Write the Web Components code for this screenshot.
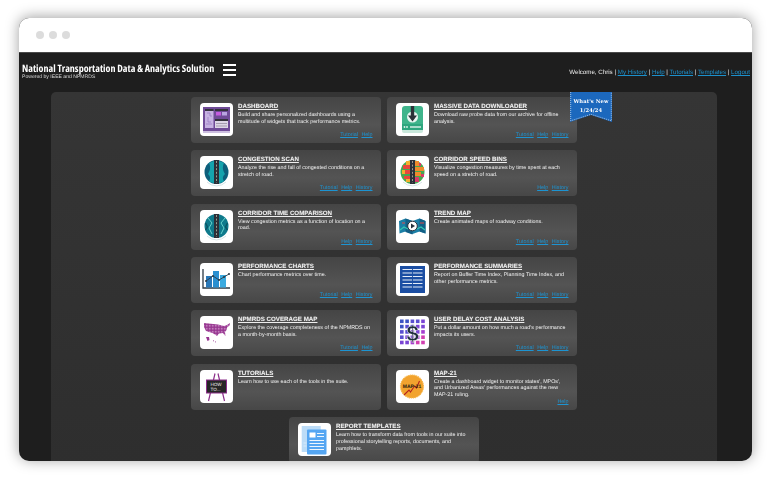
<!DOCTYPE html>
<html lang="en">
<head>
<meta charset="utf-8">
<title>National Transportation Data &amp; Analytics Solution</title>
<style>
  html, body { margin: 0; height: 100%; background: #fff; overflow: hidden; }
  body { font-family: "Liberation Sans", Arial, sans-serif; text-rendering: geometricPrecision; }
</style>
</head>
<body>
<browser-frame>
  <site-header></site-header>
  <tool-panel>
    <whats-new slot="badge"></whats-new>
    <tool-card heading="Dashboard" links="Tutorial,Help" icon="dashboard">Build and share personalized dashboards using a multitude of widgets that track performance metrics.</tool-card>
    <tool-card heading="Massive Data Downloader" links="Tutorial,Help,History" icon="download">Download raw probe data from our archive for offline analysis.</tool-card>
    <tool-card heading="Congestion Scan" links="Tutorial,Help,History" icon="scan">Analyze the rise and fall of congested conditions on a stretch of road.</tool-card>
    <tool-card heading="Corridor Speed Bins" links="Help,History" icon="bins">Visualize congestion measures by time spent at each speed on a stretch of road.</tool-card>
    <tool-card heading="Corridor Time Comparison" links="Help,History" icon="compare">View congestion metrics as a function of location on a road.</tool-card>
    <tool-card heading="Trend Map" links="Tutorial,Help,History" icon="trend">Create animated maps of roadway conditions.</tool-card>
    <tool-card heading="Performance Charts" links="Tutorial,Help,History" icon="charts">Chart performance metrics over time.</tool-card>
    <tool-card heading="Performance Summaries" links="Tutorial,Help,History" icon="summaries">Report on Buffer Time Index, Planning Time Index, and other performance metrics.</tool-card>
    <tool-card heading="NPMRDS Coverage Map" links="Tutorial,Help" icon="coverage">Explore the coverage completeness of the NPMRDS on a month-by-month basis.</tool-card>
    <tool-card heading="User Delay Cost Analysis" links="Tutorial,Help,History" icon="cost">Put a dollar amount on how much a road's performance impacts its users.</tool-card>
    <tool-card heading="Tutorials" icon="tutorials">Learn how to use each of the tools in the suite.</tool-card>
    <tool-card heading="MAP-21" links="Help" icon="map21">Create a dashboard widget to monitor states', MPOs', and Urbanized Areas' performances against the new MAP-21 ruling.</tool-card>
    <tool-card class="wide" heading="Report Templates" icon="report">Learn how to transform data from tools in our suite into professional storytelling reports, documents, and pamphlets.</tool-card>
  </tool-panel>
</browser-frame>

<script>
// road down the middle of the round icons
const road = `<rect x="14" y="4" width="5" height="24" fill="#2b2f38"/>
  <path d="M16.5 5v22" stroke="#e8e6c8" stroke-width=".6" stroke-dasharray="2 1.6"/>`;
const base = `<path d="M7 26a13.5 13.5 0 0 0 19 0" fill="none" stroke="#d5e4e6" stroke-width="1"/>`;

const grid = () => {
  let out = '';
  const cols = ['#3c55c4', '#5a4fd0', '#7a45d4', '#a63fd0', '#d23fb0'];
  for (let r = 0; r < 5; r++) for (let c = 0; c < 5; c++) {
    out += `<rect x="${4 + c * 5.3}" y="${3.5 + r * 5.3}" width="3.6" height="3.6" fill="${cols[Math.min(4, Math.floor((r + c) / 1.7))]}"/>`;
  }
  return out;
};

const icons = {
  dashboard: `<rect x="3" y="4" width="27" height="25" fill="#6f4b97"/>
    <rect x="3" y="28" width="27" height="2" fill="#cdbfe0"/>
    <rect x="5" y="6" width="8.5" height="2" fill="#34323c"/><rect x="5" y="8" width="8.5" height="17" fill="#c6b2e2"/>
    <path d="M7 10h3v3h2M8 14v5h3M6 21h6" stroke="#9a7cc4" stroke-width=".8" fill="none"/>
    <rect x="15" y="6" width="13" height="2" fill="#34323c"/><rect x="15" y="8" width="13" height="6" fill="#6f4b97"/>
    <rect x="16" y="9" width="5" height="3.5" fill="#c55be0"/><rect x="22" y="9" width="5" height="3.5" fill="#b9a4e0"/>
    <rect x="15" y="16" width="13" height="2" fill="#34323c"/><rect x="15" y="18" width="13" height="7" fill="#ddd6e6"/>
    <path d="M16 20.5h11M16 23h11" stroke="#8d8496" stroke-width=".7"/>`,
  download: `<path d="M6 6a3 3 0 0 1 3-3h15a3 3 0 0 1 3 3v17H6z" fill="#3fb48b"/>
    <rect x="6" y="21" width="21" height="6" fill="#2ea67e"/>
    <path d="M6 27h21v1a2 2 0 0 1-2 2H8a2 2 0 0 1-2-2z" fill="#c9e8dc"/>
    <circle cx="16.5" cy="14" r="5.5" fill="#e9f6f1"/>
    <path d="M14.8 3h3.4v9.5H21l-4.5 6-4.500-6h2.800z" fill="#2b3238"/>
    <circle cx="8.5" cy="24" r=".9" fill="#dff3ec"/><circle cx="11" cy="24" r=".9" fill="#dff3ec"/>
    <rect x="14" y="23.300" width="11" height="1.400" fill="#dff3ec"/>`,
  scan: `<circle cx="16.5" cy="16" r="12" fill="#0d5f7c"/>
    <path d="M9 7c2-1 4-2 5-2v22c-2 0-4-1-5-2 2-3 1-5-1-7 2-3 3-7 1-11zM24 7c-2-1-4-2-5-2v22c2 0 4-1 5-2-2-3-1-5 1-7-2-3-3-7-1-11z" fill="#15a3ad"/>
    ${road}${base}`,
  bins: `<circle cx="16.5" cy="16" r="12" fill="#45a84f"/>
    <path d="M7 9h7v4H7zM9 14h5v4H9zM8 20h6v3H8z" fill="#e8463d"/>
    <path d="M10 5h4v4h-4zM6 14h3v4H6zM10 23h4v3h-4z" fill="#f3b02e"/>
    <path d="M19 5h4v5h-4zM19 11h9v4h-9zM19 16h6v4h-6z" fill="#ee8a2c"/>
    <path d="M23 7h2v3h-2zM25 18h3v3h-3zM19 21h4v5h-4z" fill="#d93a6a"/>${road}${base}`,
  compare: `<circle cx="16.5" cy="16" r="12" fill="#0f7a8c"/>
    <path d="M8 8l4 5-3 5 3 6M25 8l-4 5 3 5-3 6" stroke="#67d2cc" stroke-width="1" fill="none"/>
    <path d="M5.5 13l2 4-2 3M27.5 13l-2 4 2 3" stroke="#0a5566" stroke-width="1.5" fill="none"/>${road}${base}`,
  trend: `<path d="M3 11l6.5-2.500 7 2.500 7-2.500 6 2.500v12.500l-6-2-7 2.500-7-2.500-6 2z" fill="#1b7fa6"/>
    <path d="M9.5 8.5V22l7 2.500V11zM23.5 8.5v13l6 2V11z" fill="#125f86"/>
    <path d="M4 20l4-3 4 2M21 19l4-2 4 3" stroke="#33c4b0" stroke-width="1.3" fill="none"/>
    <path d="M6 13h3M24 13h4" stroke="#e04a4a" stroke-width="1"/>
    <circle cx="16.5" cy="16" r="4.8" fill="#fff" stroke="#26313a" stroke-width="1"/><path d="M15 13.500l4 2.500-4 2.500z" fill="#26313a"/>`,
  charts: `<path d="M3 6v19h27" stroke="#2e3a44" stroke-width="1.3" fill="none"/>
    <rect x="6" y="13" width="6" height="11.5" fill="#2a78b8"/><rect x="13" y="8" width="6" height="16.5" fill="#2a8fd0"/><rect x="20" y="12" width="6" height="12.5" fill="#3aaae0"/>
    <path d="M6 18l7-5 6 4 5-3 5-3" stroke="#2e3a44" stroke-width=".9" fill="none"/>
    <g fill="#2e3a44"><circle cx="6" cy="18" r="1"/><circle cx="13" cy="13" r="1"/><circle cx="19" cy="17" r="1"/><circle cx="24" cy="14" r="1"/><circle cx="29" cy="11" r="1"/></g>`,
  summaries: `<rect x="4" y="3" width="25" height="27" fill="#1b4ea3"/>
    <path d="M6.5 6.5h20M6.5 10h20M6.5 13.5h20M6.5 17h20M6.5 20.5h20M6.5 24h20" stroke="#e4ecf8" stroke-width="1.2"/>
    <path d="M16.5 5v21" stroke="#1b4ea3" stroke-width=".9"/>`,
  coverage: `<defs><pattern id="dots" width="1.5" height="1.5" patternUnits="userSpaceOnUse"><rect width="1.5" height="1.5" fill="#96348f"/><rect width=".7" height=".7" fill="#dcaed8"/></pattern></defs>
    <path d="M4 7l14 1.500 2 .5 2 .5 2 .5 3-1 3-2-.5 2.500-2.500 2-.5 2.500-1.500 2 .5 4-1-1-1.500-2-4 .5-2 2.500-2-1.500-2.500-1.500-3.500-1-3-1-2-4z" fill="url(#dots)"/>
    <path d="M6 21l3 0 .5 3-2 1z" fill="#96348f"/><path d="M13 24.500l1 .6M15 25.500l1 .8" stroke="#96348f" stroke-width=".8"/>`,
  cost: `${grid()}
    <text x="16.5" y="24.5" text-anchor="middle" font-family="Liberation Sans" font-weight="700" font-size="22" fill="#20303c" stroke="#fff" stroke-width=".4">$</text>`,
  tutorials: `<path d="M15 3.5L8.5 31M18 3.5L24.5 31" stroke="#8c2f8a" stroke-width="1.2"/>
    <rect x="6.5" y="10" width="20" height="13" fill="#262626" stroke="#8c2f8a" stroke-width="1"/>
    <text x="16" y="15.5" text-anchor="middle" font-family="Liberation Sans" font-size="4.6" fill="#eee">HOW</text>
    <text x="15.5" y="21" text-anchor="middle" font-family="Liberation Sans" font-size="4.6" fill="#eee">TO...</text>`,
  map21: `<circle cx="16" cy="16.5" r="11.5" fill="#f2a32e" stroke="#f6b84e" stroke-width="1.2" stroke-dasharray="1.2 .8"/>
    <path d="M8 25l5-5 1.500 2 4-6 2 2 3-7" stroke="#b5231f" stroke-width="1.1" fill="none"/>
    <text x="16" y="17.5" text-anchor="middle" font-family="Liberation Sans" font-weight="700" font-size="5" fill="#2a1c10">MAP-21</text>`,
  report: `<rect x="3.7" y="3" width="19" height="26" fill="#bcdcf7"/>
    <path d="M5.5 20h3M5.5 23h3" stroke="#d8ebfa"/>
    <rect x="9" y="6.5" width="19.5" height="25" rx="1" fill="#55a6f2"/>
    <rect x="11.5" y="9.5" width="6" height="5" fill="#fff"/>
    <path d="M19 10.5h7M19 13.5h7M11.5 17.5H26M11.5 20.5H26M11.5 23.5H26M11.5 26.5H26" stroke="#fff" stroke-width=".9"/>`
};

class BrowserFrame extends HTMLElement {
  connectedCallback() {
    this.attachShadow({ mode: 'open' });
    this.shadowRoot.innerHTML = `
      <style>
        :host {
          display: flex; flex-direction: column;
          width: 733px; height: 443px;
          margin: 18px 0 0 19px;
          background: #1e1e1e;
          border-radius: 10px;
          overflow: hidden;
          box-shadow: 0 -1px 14px rgba(0, 0, 0, .38);
        }
        .bar { flex: none; height: 34px; background: #fff; border-bottom: 1px solid #4a4a4a; display: flex; align-items: center; gap: 5px; padding-left: 17px; }
        .bar i { width: 8px; height: 8px; border-radius: 50%; background: #dcdcdc; }
        .screen { flex: 1; min-height: 0; display: flex; flex-direction: column; filter: blur(.2px); }
      </style>
      <div class="bar"><i></i><i></i><i></i></div>
      <div class="screen"><slot></slot></div>`;
  }
}

class SiteHeader extends HTMLElement {
  connectedCallback() {
    this.attachShadow({ mode: 'open' });
    const links = ['My History', 'Help', 'Tutorials', 'Templates', 'Logout'];
    this.shadowRoot.innerHTML = `
      <style>
        :host { display: flex; flex: none; height: 39px; align-items: flex-start; justify-content: space-between; padding: 0 2px 0 3px; color: #fff; font-family: "Liberation Sans", Arial, sans-serif; }
        .brand { display: flex; align-items: flex-start; gap: 9px; padding-top: 9px; }
        h1 { margin: 0; font: 700 10.05px/12px "Open Sans", sans-serif; font-stretch: 75%; white-space: nowrap; }
        p { margin: 0; font-size: 5.1px; line-height: 6px; color: #ddd; }
        .burger { display: flex; flex-direction: column; gap: 3px; margin-top: 2px; }
        .burger i { width: 13px; height: 2px; background: #fff; }
        nav { font-size: 6.18px; line-height: 8px; margin-top: 16px; color: #eee; white-space: nowrap; }
        a { color: #1b90cc; }
      </style>
      <div class="brand">
        <div><h1>National Transportation Data &amp; Analytics Solution</h1><p>Powered by IEEE and NPMRDS</p></div>
        <div class="burger"><i></i><i></i><i></i></div>
      </div>
      <nav>Welcome, Chris | ${links.map(l => `<a href="#">${l}</a>`).join(' | ')}</nav>`;
  }
}

class ToolPanel extends HTMLElement {
  connectedCallback() {
    this.attachShadow({ mode: 'open' });
    this.shadowRoot.innerHTML = `
      <style>
        :host { display: block; flex: 1; position: relative; margin: 0 35px 0 32px; padding-top: 5px; background: linear-gradient(#353535, #2e2e2e); border-radius: 5px 5px 0 0; }
        .grid { display: grid; grid-template-columns: 190px 190px; grid-auto-rows: 46px; gap: 7.33px 6px; justify-content: center; }
        ::slotted(.wide) { grid-column: 1 / -1; justify-self: center; width: 190px; }
      </style>
      <div class="grid"><slot></slot></div>
      <slot name="badge"></slot>`;
  }
}

class ToolCard extends HTMLElement {
  connectedCallback() {
    this.attachShadow({ mode: 'open' });
    const links = (this.getAttribute('links') || '').split(',').filter(Boolean);
    this.shadowRoot.innerHTML = `
      <style>
        :host { display: flex; gap: 5px; box-sizing: border-box; padding: 6px 8.5px 4px 9px; height: 46px; border-radius: 4px; background: linear-gradient(#454545, #545454 60%, #474747); color: #fff; font-family: "Liberation Sans", Arial, sans-serif; }
        .ico { flex: none; width: 33px; height: 33px; background: #fff; border-radius: 4px; display: block; }
        .txt { flex: 1; min-width: 0; display: flex; flex-direction: column; }
        h2 { margin: 0 0 2px; font-size: 6.2px; line-height: 7px; font-weight: 700; color: #eee; text-transform: uppercase; text-decoration: underline; text-shadow: 0 0 1px rgba(255,255,255,.3); }
        p { margin: 0; font-size: 5.35px; line-height: 6.8px; color: #f4f4f4; }
        .links { margin-top: auto; display: flex; justify-content: flex-end; gap: 3.5px; font-size: 5.4px; line-height: 7px; }
        a { color: #1d94d2; }
      </style>
      <svg class="ico" viewBox="0 0 33 33">${icons[this.getAttribute('icon')] || ''}</svg>
      <div class="txt">
        <h2>${this.getAttribute('heading')}</h2>
        <p><slot></slot></p>
        <div class="links">${links.map(l => `<a href="#">${l}</a>`).join('')}</div>
      </div>`;
  }
}

class WhatsNew extends HTMLElement {
  connectedCallback() {
    this.attachShadow({ mode: 'open' });
    this.shadowRoot.innerHTML = `
      <style>
        :host { position: absolute; left: 519px; top: 0; width: 42px; height: 30px; color: #fff; font: 700 5.2px/9px "DejaVu Serif", serif; text-align: center; }
        svg { position: absolute; inset: 0; }
        div { position: relative; padding-top: 6px; letter-spacing: .1px; }
      </style>
      <svg width="42" height="30" viewBox="0 0 42 30">
        <path d="M0 0h42v30L21 23 0 30z" fill="#1c68bd"/>
        <path d="M.7 0v28.8L21 22.3l20.3 6.500V0" fill="none" stroke="#dbe8f6" stroke-width=".7" stroke-dasharray="1 1"/>
      </svg>
      <div>What's New<br>1/24/24</div>`;
  }
}

customElements.define('browser-frame', BrowserFrame);
customElements.define('site-header', SiteHeader);
customElements.define('tool-panel', ToolPanel);
customElements.define('tool-card', ToolCard);
customElements.define('whats-new', WhatsNew);
</script>
</body>
</html>
